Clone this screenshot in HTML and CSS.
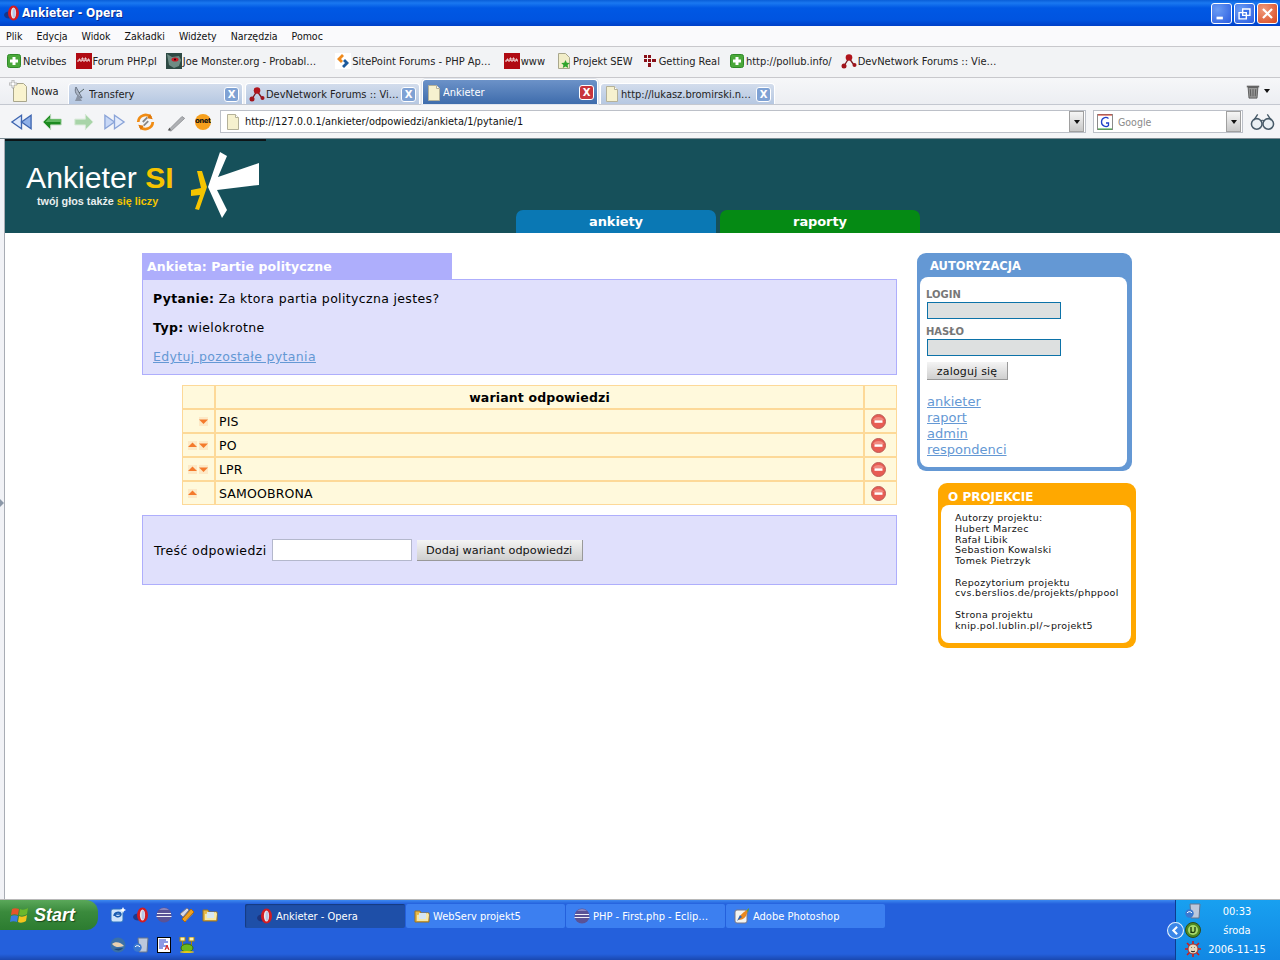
FILE: index.html
```html
<!DOCTYPE html>
<html lang="pl">
<head>
<meta charset="utf-8">
<title>Ankieter - Opera</title>
<link rel="stylesheet" href="styles.css">
</head>
<body>
<svg class="sprite" xmlns="http://www.w3.org/2000/svg">
  <symbol id="opera" viewBox="0 0 16 16"><ellipse cx="5" cy="10" rx="5" ry="3.500" fill="#1c2c70" opacity=".75"/><ellipse cx="9.500" cy="8" rx="5.500" ry="7.500" fill="#d01c24"/><ellipse cx="9.500" cy="8" rx="2.600" ry="5.500" fill="#f0e8e8"/><ellipse cx="10" cy="8" rx="1.500" ry="4.800" fill="#b8c8e8"/></symbol>
  <symbol id="plus" viewBox="0 0 16 16"><rect x="1.500" y="1.500" width="13" height="13" rx="2" fill="#4aa83a" stroke="#2f8a28"/><path d="M6.500 4h3v2.500H12v3H9.500V12h-3V9.500H4v-3h2.500z" fill="#fff"/></symbol>
  <symbol id="pulse" viewBox="0 0 16 16"><rect width="16" height="16" fill="#b00a12"/><path d="M1 8h2V6h1v2h2V5h1v3h2V5h1v3h2V6h1v2h1" fill="none" stroke="#f4e4e4" stroke-width="1"/></symbol>
  <symbol id="joe" viewBox="0 0 16 16"><rect width="16" height="16" fill="#2e4a44"/><path d="M1 1l5 3 7-1 2 4-2 6-5 2-5-3z" fill="#6e8c84"/><ellipse cx="9" cy="6.500" rx="3.500" ry="2" fill="#c81c28"/><circle cx="9" cy="6.500" r="1" fill="#300"/></symbol>
  <symbol id="sitepoint" viewBox="0 0 16 16"><rect width="16" height="16" fill="#fff"/><path d="M7 1 2 6l4 4 2-2-2-2 3-3z" fill="#f08a1c"/><path d="M9 15l5-5-4-4-2 2 2 2-3 3z" fill="#1c5a9c"/></symbol>
  <symbol id="pagestar" viewBox="0 0 16 16"><path d="M2.500.5h7l4 4v11h-11z" fill="#f1edc8" stroke="#a9a78c"/><path d="M9.500 7l1.300 2.800 3 .3-2.200 2 .6 3-2.700-1.500-2.700 1.500.6-3-2.200-2 3-.3z" fill="#31a52c"/></symbol>
  <symbol id="real" viewBox="0 0 16 16"><g fill="#8a1018"><rect x="2" y="2" width="3" height="3"/><rect x="6" y="2" width="3" height="3"/><rect x="2" y="6" width="3" height="3"/><rect x="6" y="6" width="3" height="3"/><rect x="10" y="6" width="4" height="3"/><rect x="6" y="10" width="3" height="4"/></g></symbol>
  <symbol id="dev" viewBox="0 0 16 16"><path d="M3 13 8 5l5 7" fill="none" stroke="#7a1a20" stroke-width="1.300"/><circle cx="8" cy="4.500" r="3.300" fill="#b0141c"/><circle cx="3" cy="13" r="2.500" fill="#a0141c"/><circle cx="13.500" cy="12" r="2" fill="#a0141c"/></symbol>
  <symbol id="page" viewBox="0 0 16 16"><path d="M2.500.5h8l3 3v12h-11z" fill="#f6f1cf" stroke="#b4b199"/><path d="M10.500.5v3h3" fill="#fff" stroke="#b4b199"/></symbol>
  <symbol id="dish" viewBox="0 0 16 16"><path d="M4 1c-2 4 0 9 6 11z" fill="#aeb8c8" stroke="#6a7484"/><path d="M6 8 3 15h7z" fill="#8a94a4"/><path d="M7 7l5-4" stroke="#566" stroke-width="1"/></symbol>
  <symbol id="newpage" viewBox="0 0 20 22"><path d="M4.500 3.500h10l3 3v15h-13z" fill="#f9f3cf" stroke="#a9a68c"/><path d="M3 0h2v3h3v2H5v3H3V5H0V3h3z" fill="#fff" stroke="#888" stroke-width=".6"/></symbol>
  <symbol id="trash" viewBox="0 0 16 18"><path d="M1 3h14v2H1z" fill="#666"/><path d="M2.500 5h11l-1 12h-9z" fill="#989898" stroke="#555"/><path d="M5 7l.5 8M8 7v8M11 7l-.5 8" stroke="#444" stroke-width=".8"/></symbol>
  <symbol id="back2" viewBox="0 0 24 20"><path d="M12 3 2 10l10 7z" fill="#dfeafc" stroke="#3f66b0" stroke-width="1.400"/><path d="M22 3l-10 7 10 7z" fill="#8fb0e8" stroke="#3f66b0" stroke-width="1.400"/></symbol>
  <symbol id="arrowl" viewBox="0 0 24 20"><path d="M10 2 2 10l8 8v-5h11V7H10z" fill="#1c8a20" stroke="#b8d8b8"/><path d="M9 5 4.500 10H21V7H9z" fill="#60b860"/></symbol>
  <symbol id="arrowr" viewBox="0 0 24 20"><path d="M14 2l8 8-8 8v-5H3V7h11z" fill="#a8d4a8" stroke="#d4e8d4"/></symbol>
  <symbol id="fwd2" viewBox="0 0 24 20"><path d="M2 3l10 7-10 7z" fill="#c8d8f6" stroke="#8aa4d8" stroke-width="1.400"/><path d="M12 3l10 7-10 7z" fill="#e4ecfc" stroke="#8aa4d8" stroke-width="1.400"/></symbol>
  <symbol id="reload" viewBox="0 0 22 22"><path d="M3 11a8 8 0 0 1 14-5" fill="none" stroke="#f08c14" stroke-width="3"/><path d="M19 11a8 8 0 0 1-14 5" fill="none" stroke="#f08c14" stroke-width="3"/><path d="M8 11l5-5M9 15l5-5" stroke="#888" stroke-width="2"/><path d="M16 2l3 6-6-1zM6 20l-3-6 6 1z" fill="#e07808"/></symbol>
  <symbol id="pen" viewBox="0 0 22 22"><path d="M2 20 17 5l3 2L5 21z" fill="#aeb0b4" stroke="#909296"/><path d="M2 20l1-3 2 3z" fill="#555"/></symbol>
  <symbol id="glasses" viewBox="0 0 26 18"><circle cx="7" cy="11" r="5.500" fill="#eaf0f4" stroke="#475a68" stroke-width="1.600"/><circle cx="19" cy="11" r="5.500" fill="#eaf0f4" stroke="#475a68" stroke-width="1.600"/><path d="M4 7 8 1M22 7l-4-6M11 8c1-1 3-1 4 0" fill="none" stroke="#475a68" stroke-width="1.400"/></symbol>
  <symbol id="up" viewBox="0 0 9 9"><rect width="9" height="9" fill="#fde9c6"/><path d="M4.500 1.500 9 6H0z" fill="#f47a2c"/></symbol>
  <symbol id="down" viewBox="0 0 9 9"><rect width="9" height="9" fill="#fde9c6"/><path d="M0 2.500h9L4.500 7z" fill="#f47a2c"/></symbol>
  <symbol id="del" viewBox="0 0 15 15"><circle cx="7.500" cy="7.500" r="7" fill="#e85c54" stroke="#b95c56"/><path d="M2 6a6 5 0 0 1 11 0z" fill="#f08a80"/><rect x="3.500" y="6.300" width="8" height="2.500" fill="#fff"/></symbol>
  <symbol id="winflag" viewBox="0 0 20 20"><path d="M2 4c2-1 4-1 7 0l-1 6c-2-1-5-1-7 0z" fill="#e4542a"/><path d="M10 4c2 1 5 1 8-1l-1 6c-3 2-6 2-8 1z" fill="#6cb82c"/><path d="M1 11c2-1 5-1 7 0l-1 6c-2-1-5-1-7 0z" fill="#3a7ce0"/><path d="M9 11c2 1 5 1 8-1l-1 6c-3 2-6 2-8 1z" fill="#f4c41c"/></symbol>
  <symbol id="ie" viewBox="0 0 16 16"><rect x="1" y="2" width="12" height="13" rx="2" fill="#cfe4fa" stroke="#2a70c0"/><path d="M4 9c0-4 6-5 7-2H5c0 3 4 4 6 1" fill="none" stroke="#1a5cb0" stroke-width="1.400"/><path d="M13 0l1 2 2 1-2 1-1 2-1-2-2-1 2-1z" fill="#fff"/></symbol>
  <symbol id="eclipse" viewBox="0 0 16 16"><circle cx="8" cy="8" r="7.500" fill="#5a5296"/><path d="M1 6.500h14M.5 9.500h15" stroke="#f0f0f8" stroke-width="1.200"/><path d="M3 3a7 7 0 0 1 10 0z" fill="#8a86c0"/></symbol>
  <symbol id="winamp" viewBox="0 0 16 16"><path d="M3 12 12 2l3 3-9 10z" fill="#f0a020" stroke="#a86810"/><path d="M1 7l7-6 2 2-6 7zM7 14l7-7" stroke="#7a7a8a" fill="#d8d8e8"/></symbol>
  <symbol id="folder" viewBox="0 0 16 16"><path d="M1 3h5l1 2h8v9H1z" fill="#e8b848" stroke="#9a7420"/><path d="M3 7l11-2 1 2-1 6H3z" fill="#f6e8a8"/><path d="M5 5h7v6H5z" fill="#d4e6f4"/></symbol>
  <symbol id="tbird" viewBox="0 0 16 16"><circle cx="8" cy="8" r="7.500" fill="#3a70a8"/><path d="M2 7c3-3 9-2 12 2-4 1-8 2-11-1z" fill="#e8d0b0"/><path d="M4 12c3 2 7 2 9-1z" fill="#1e4878"/></symbol>
  <symbol id="recycle" viewBox="0 0 16 16"><path d="M5 1h10l-1 14H6z" fill="#bcc8dc" stroke="#66748c"/><circle cx="4.500" cy="10.500" r="4.200" fill="#3a78d0"/><path d="M2 10a3 3 0 0 1 5 0" stroke="#fff" fill="none"/></symbol>
  <symbol id="notes" viewBox="0 0 16 16"><rect x="1.500" y=".5" width="13" height="15" fill="#fff" stroke="#000"/><path d="M3 3h7M3 5h9M3 7h5M3 9h7M3 11h4" stroke="#1c34c8"/><path d="M9 13l2-5 2 5M10 11h2" stroke="#d01818" fill="none"/></symbol>
  <symbol id="frog" viewBox="0 0 16 16"><rect x="1" y="0" width="5" height="4" fill="#fff3b0" stroke="#a88410"/><rect x="10" y="0" width="5" height="4" fill="#fff3b0" stroke="#a88410"/><path d="M3.500 4v8M12.500 4v8" stroke="#a88410"/><ellipse cx="8" cy="11" rx="6" ry="4" fill="#6cb81c" stroke="#3c6c08"/><ellipse cx="8" cy="15" rx="7" ry="1" fill="#e8c818"/></symbol>
  <symbol id="ps" viewBox="0 0 16 16"><rect x="1" y="2" width="12" height="13" rx="2" fill="#f4f4f0" stroke="#778"/><path d="M4 12c1-4 4-7 9-10l2-2-3 8c-2 3-5 4-8 4z" fill="#e88820"/><path d="M13 2l2-2-1 5z" fill="#48a038"/><path d="M3 13l3-6 2 2z" fill="#2c64b8"/></symbol>
  <symbol id="utorrent" viewBox="0 0 16 16"><circle cx="8" cy="8" r="7.500" fill="#4e8a22" stroke="#2e4a18"/><circle cx="8" cy="8" r="5" fill="#a8d86c"/><path d="M6 5v6M6 9c0 2 4 2 4 0V5" stroke="#1a3a08" fill="none" stroke-width="1.300"/></symbol>
  <symbol id="sun" viewBox="0 0 16 16"><path d="M8 0v16M0 8h16M2 2l12 12M14 2 2 14" stroke="#d81818" stroke-width="1.600"/><circle cx="8" cy="8" r="5" fill="#e8d8c0" stroke="#a03030"/><path d="M6 6.500h.5M9.500 6.500h.5M6 10c1 1 3 1 4 0" stroke="#222"/></symbol>
</svg>

<header class="titlebar">
  <svg class="ic16"><use href="#opera"/></svg>
  <span class="title">Ankieter - Opera</span>
  <span class="winbtns">
    <span class="winbtn">
      <svg viewBox="0 0 21 21"><rect x="5" y="14" width="7" height="3" fill="#fff"/></svg>
    </span>
    <span class="winbtn">
      <svg viewBox="0 0 21 21"><path d="M8.500 5.500h8v7h-8zM4.500 9.500h8v7h-8z" fill="#3a70e8" stroke="#fff" stroke-width="1.500"/></svg>
    </span>
    <span class="winbtn winclose">
      <svg viewBox="0 0 21 21"><path d="M5.500 5.500l10 10M15.500 5.500l-10 10" stroke="#fff" stroke-width="2.400"/></svg>
    </span>
  </span>
</header>

<nav class="menubar">
  <span>Plik</span><span>Edycja</span><span>Widok</span><span>Zakładki</span><span>Widżety</span><span>Narzędzia</span><span>Pomoc</span>
</nav>

<nav class="bookmarks">
  <span class="bm"><svg class="ic16"><use href="#plus"/></svg>Netvibes</span>
  <span class="bm"><svg class="ic16"><use href="#pulse"/></svg>Forum PHP.pl</span>
  <span class="bm"><svg class="ic16"><use href="#joe"/></svg>Joe Monster.org - Probabl…</span>
  <span class="bm bmsite"><svg class="ic16"><use href="#sitepoint"/></svg>SitePoint Forums - PHP Ap…</span>
  <span class="bm bmwww"><svg class="ic16"><use href="#pulse"/></svg>www</span>
  <span class="bm bmproj"><svg class="ic16"><use href="#pagestar"/></svg>Projekt SEW</span>
  <span class="bm"><svg class="ic16"><use href="#real"/></svg>Getting Real</span>
  <span class="bm"><svg class="ic16"><use href="#plus"/></svg>http://pollub.info/</span>
  <span class="bm"><svg class="ic16"><use href="#dev"/></svg>DevNetwork Forums :: Vie…</span>
</nav>

<div class="tabbar">
  <span class="newtab"><svg class="icnew"><use href="#newpage"/></svg>Nowa</span>
  <span class="tab"><svg class="ic16"><use href="#dish"/></svg><span class="tabtext">Transfery</span><span class="tabx">X</span></span>
  <span class="tab"><svg class="ic16"><use href="#dev"/></svg><span class="tabtext">DevNetwork Forums :: Vi…</span><span class="tabx">X</span></span>
  <span class="tab tabactive"><svg class="ic16"><use href="#page"/></svg><span class="tabtext">Ankieter</span><span class="tabx">X</span></span>
  <span class="tab"><svg class="ic16"><use href="#page"/></svg><span class="tabtext">http://lukasz.bromirski.n…</span><span class="tabx">X</span></span>
  <span class="trash"><svg class="ic16"><use href="#trash"/></svg><i class="caret"></i></span>
</div>

<div class="addressbar">
  <span class="tools">
    <svg class="tool"><use href="#back2"/></svg>
    <svg class="tool"><use href="#arrowl"/></svg>
    <svg class="tool"><use href="#arrowr"/></svg>
    <svg class="tool"><use href="#fwd2"/></svg>
    <svg class="tool"><use href="#reload"/></svg>
    <svg class="tool"><use href="#pen"/></svg>
    <span class="onet">onet</span>
  </span>
  <span class="field urlfield"><svg class="ic16"><use href="#page"/></svg><span class="url">http://127.0.0.1/ankieter/odpowiedzi/ankieta/1/pytanie/1</span><span class="drop"><i class="caret"></i></span></span>
  <span class="field searchfield">
    <svg class="ic16" viewBox="0 0 16 16"><rect x=".5" y=".5" width="15" height="15" fill="#fff" stroke="#8a8a8a"/><path d="M1 1h14" stroke="#d03020"/><path d="M1 15h14" stroke="#30a030"/><path d="M11.500 4.500C9 2.500 4.500 3.500 4.500 8s5 5.500 7 3.500V9H9" fill="none" stroke="#2040c8" stroke-width="1.300"/></svg>
    <span class="search">Google</span><span class="drop"><i class="caret"></i></span>
  </span>
  <svg class="glasses"><use href="#glasses"/></svg>
</div>

<div class="viewport">
  <div class="gutter"><i class="gutterarrow"></i></div>
  <div class="page">
    <div class="banner">
      <div class="logo">
        <div class="logotext">
          <div class="brand">Ankieter <b>SI</b></div>
          <div class="slogan">twój głos także <em>się liczy</em></div>
        </div>
        <svg class="logomark" viewBox="0 0 72 70">
          <path d="M0 38l10-2-4-17 5 0 5 16-1 3-7 20-4-1 5-14-9 1z" fill="#f5c400"/>
          <path d="M17 35 29 0l7 4-9 21L68 11v22l-42 5 10 20-5 8z" fill="#fff"/>
        </svg>
      </div>
      <nav class="mainnav">
        <a class="navblue">ankiety</a>
        <a class="navgreen">raporty</a>
      </nav>
    </div>

    <div class="content">
      <main class="maincol">
        <h2 class="boxtitle">Ankieta: Partie polityczne</h2>
        <section class="infobox">
          <p><b>Pytanie:</b> Za ktora partia polityczna jestes?</p>
          <p><b>Typ:</b> wielokrotne</p>
          <p><a class="link">Edytuj pozostałe pytania</a></p>
        </section>

        <table class="variants">
          <thead>
            <tr><th class="cside"></th><th>wariant odpowiedzi</th><th class="cside"></th></tr>
          </thead>
          <tbody>
            <tr>
              <td class="cside carrows"><span class="arrowslot"></span><svg class="arrow"><use href="#down"/></svg></td>
              <td>PIS</td>
              <td class="cside cdel"><svg class="del"><use href="#del"/></svg></td>
            </tr>
            <tr>
              <td class="cside carrows"><svg class="arrow"><use href="#up"/></svg><svg class="arrow"><use href="#down"/></svg></td>
              <td>PO</td>
              <td class="cside cdel"><svg class="del"><use href="#del"/></svg></td>
            </tr>
            <tr>
              <td class="cside carrows"><svg class="arrow"><use href="#up"/></svg><svg class="arrow"><use href="#down"/></svg></td>
              <td>LPR</td>
              <td class="cside cdel"><svg class="del"><use href="#del"/></svg></td>
            </tr>
            <tr>
              <td class="cside carrows"><svg class="arrow"><use href="#up"/></svg><span class="arrowslot"></span></td>
              <td>SAMOOBRONA</td>
              <td class="cside cdel"><svg class="del"><use href="#del"/></svg></td>
            </tr>
          </tbody>
        </table>

        <form class="addform">
          <label>Treść odpowiedzi</label>
          <input class="addinput" type="text">
          <button class="btn addbtn" type="button">Dodaj wariant odpowiedzi</button>
        </form>
      </main>

      <aside class="sidecol">
        <section class="panel panelblue">
          <h3>AUTORYZACJA</h3>
          <div class="panelbody">
            <label class="flabel">LOGIN</label>
            <input class="finput" type="text">
            <label class="flabel">HASŁO</label>
            <input class="finput" type="password">
            <button class="btn loginbtn" type="button">zaloguj się</button>
            <ul class="sidelinks">
              <li><a class="link">ankieter</a></li>
              <li><a class="link">raport</a></li>
              <li><a class="link">admin</a></li>
              <li><a class="link">respondenci</a></li>
            </ul>
          </div>
        </section>
        <section class="panel panelorange">
          <h3>O PROJEKCIE</h3>
          <div class="panelbody">
            <p>Autorzy projektu:<br>Hubert Marzec<br>Rafał Libik<br>Sebastion Kowalski<br>Tomek Pietrzyk</p>
            <p>Repozytorium projektu<br>cvs.berslios.de/projekts/phppool</p>
            <p>Strona projektu<br>knip.pol.lublin.pl/~projekt5</p>
          </div>
        </section>
      </aside>
    </div>
  </div>
</div>

<footer class="taskbar">
  <span class="start"><svg class="flag"><use href="#winflag"/></svg>Start</span>
  <span class="quick">
    <svg class="ic16"><use href="#ie"/></svg>
    <svg class="ic16"><use href="#opera"/></svg>
    <svg class="ic16"><use href="#eclipse"/></svg>
    <svg class="ic16"><use href="#winamp"/></svg>
    <svg class="ic16"><use href="#folder"/></svg>
    <svg class="ic16"><use href="#tbird"/></svg>
    <svg class="ic16"><use href="#recycle"/></svg>
    <svg class="ic16"><use href="#notes"/></svg>
    <svg class="ic16"><use href="#frog"/></svg>
  </span>
  <span class="tasks">
    <span class="task taskactive"><svg class="ic16"><use href="#opera"/></svg>Ankieter - Opera</span>
    <span class="task"><svg class="ic16"><use href="#folder"/></svg>WebServ projekt5</span>
    <span class="task"><svg class="ic16"><use href="#eclipse"/></svg>PHP - First.php - Eclip…</span>
    <span class="task"><svg class="ic16"><use href="#ps"/></svg>Adobe Photoshop</span>
  </span>
  <span class="chevron"><svg viewBox="0 0 16 16"><circle cx="8" cy="8" r="7.500" fill="#3a86e8" stroke="#e4f0fc"/><path d="M9.500 4.500 6 8l3.500 3.500" fill="none" stroke="#fff" stroke-width="2"/></svg></span>
  <span class="tray">
    <span class="trayicons">
      <svg class="ic16"><use href="#recycle"/></svg>
      <svg class="ic16"><use href="#utorrent"/></svg>
      <svg class="ic16"><use href="#sun"/></svg>
    </span>
    <span class="clock"><span>00:33</span><span>środa</span><span>2006-11-15</span></span>
  </span>
</footer>
</body>
</html>
```
FILE: styles.css
```css
* { box-sizing: border-box; }
html, body { margin: 0; padding: 0; }
body {
  width: 1280px;
  height: 960px;
  overflow: hidden;
  display: flex;
  flex-direction: column;
  background: #f1f2f6;
  font-family: "DejaVu Sans", Verdana, sans-serif;
  color: #000;
}
.sprite { width: 0; height: 0; display: block; flex: none; }
svg { display: block; flex: none; }
.ic16 { width: 16px; height: 16px; }
.icnew { width: 20px; height: 22px; }

/* title bar */
.titlebar {
  height: 26px;
  flex: none;
  display: flex;
  align-items: center;
  padding: 0 2px 0 4px;
  gap: 2px;
  background: linear-gradient(#0a5ed8 0, #1a78f0 3px, #0058e4 8px, #0054e0 20px, #0040c8 26px);
}
.title {
  color: #fff;
  font: bold 12px/1 "DejaVu Sans", sans-serif;
  font-stretch: condensed;
  text-shadow: 1px 1px 0 #0a2c90;
}
.winbtns { margin-left: auto; display: flex; gap: 2px; }
.winbtn {
  width: 21px;
  height: 21px;
  border: 1px solid #fff;
  border-radius: 3px;
  background: radial-gradient(circle at 30% 30%, #6a9cf4, #2a5ce0);
}
.winbtn svg { width: 19px; height: 19px; }
.winclose { background: radial-gradient(circle at 30% 30%, #f09a7c, #d8461c); }

/* menu */
.menubar {
  height: 21px;
  flex: none;
  display: flex;
  align-items: center;
  gap: 14px;
  padding: 0 6px;
  background: #fafafc;
  border-bottom: 1px solid #c8c8cc;
  font: 10.500px "DejaVu Sans", sans-serif;
  font-stretch: condensed;
  color: #111;
}

/* bookmarks */
.bookmarks {
  height: 31px;
  flex: none;
  display: flex;
  align-items: center;
  gap: 9px;
  padding: 0 6px 2px;
  background: #f2f3f5;
  border-bottom: 1px solid #c8c8cc;
  font: 11px "DejaVu Sans", sans-serif;
  font-stretch: condensed;
  color: #222;
}
.bm { display: flex; align-items: center; gap: 1px; white-space: nowrap; }
.bmsite { margin-left: 10px; }
.bmwww { margin-left: 4px; }
.bmproj { margin-left: 2px; }

/* tabs */
.tabbar {
  height: 27px;
  flex: none;
  display: flex;
  align-items: flex-end;
  padding-left: 9px;
  gap: 2px;
  background: linear-gradient(#f6f7f9, #eceef2);
  border-bottom: 1px solid #c4c8d0;
  font: 11px "DejaVu Sans", sans-serif;
  font-stretch: condensed;
}
.newtab {
  width: 57px;
  height: 26px;
  display: flex;
  align-items: center;
  gap: 2px;
  color: #222;
}
.tab {
  width: 175px;
  height: 21px;
  display: flex;
  align-items: center;
  gap: 1px;
  padding: 0 3px;
  background: linear-gradient(#d2dcec, #b6c8e2);
  border: 1px solid #fff;
  border-bottom: 0;
  border-radius: 4px 4px 0 0;
  color: #222;
}
.tabtext { flex: 1; white-space: nowrap; overflow: hidden; }
.tabx {
  width: 15px;
  height: 15px;
  flex: none;
  border: 1px solid #fff;
  border-radius: 3px;
  background: #7fa2d4;
  color: #fff;
  font: bold 10px/13px "DejaVu Sans", sans-serif;
  text-align: center;
}
.tabactive {
  width: 176px;
  height: 25px;
  background: linear-gradient(#6c92c8, #3e6cac);
  color: #fff;
  box-shadow: 0 0 0 1px #dfe4ec;
  padding-top: 1px;
}
.tabactive .tabx { background: #c8343c; }
.trash {
  margin-left: auto;
  margin-right: 10px;
  align-self: center;
  display: flex;
  align-items: center;
  gap: 3px;
}
.caret {
  display: block;
  width: 0;
  height: 0;
  border: 3px solid transparent;
  border-top: 4px solid #111;
  border-bottom: 0;
}

/* address */
.addressbar {
  height: 34px;
  flex: none;
  display: flex;
  align-items: center;
  padding: 0 7px 0 10px;
  background: #f4f5f7;
  border-bottom: 1px solid #7c8c94;
}
.tools { display: flex; align-items: center; gap: 8px; width: 210px; flex: none; }
.tool { width: 23px; height: 20px; }
.onet {
  width: 16px;
  height: 16px;
  margin-left: -1px;
  border-radius: 50%;
  background: #f6a01e;
  color: #111;
  font: bold 7px/15px "DejaVu Sans", sans-serif;
  letter-spacing: -.5px;
  text-align: center;
  overflow: hidden;
}
.field {
  height: 23px;
  display: flex;
  align-items: center;
  background: #fff;
  border: 1px solid #bcc0c8;
  padding-left: 4px;
  font: 10.500px "DejaVu Sans", sans-serif;
  font-stretch: condensed;
}
.urlfield { width: 866px; flex: none; }
.url { flex: 1; padding-left: 4px; color: #111; font-size: 10.900px; }
.searchfield { width: 150px; flex: none; margin-left: 7px; padding-left: 3px; }
.search { flex: 1; padding-left: 5px; color: #8a8a8a; }
.drop {
  width: 15px;
  height: 21px;
  flex: none;
  display: flex;
  align-items: center;
  justify-content: center;
  margin-right: 1px;
  background: linear-gradient(#f6f6f6, #c8c8c8);
  border: 1px solid #a0a0a0;
}
.glasses { width: 25px; height: 18px; margin-left: 7px; }

/* page */
.viewport { height: 761px; flex: none; display: flex; border-bottom: 1px solid #b8b8b8; }
.gutter { width: 5px; flex: none; border-right: 1px solid #a8acb4; padding-top: 360px; }
.gutterarrow {
  display: block;
  width: 0;
  height: 0;
  border: 4px solid transparent;
  border-left: 4px solid #8c98a8;
  border-right: 0;
}
.page { flex: 1; background: #fff; min-width: 0; }
.banner { height: 94px; display: flex; background: #16505a; }
.logo {
  width: 261px;
  flex: none;
  display: flex;
  border-top: 2px solid #0c1416;
}
.logotext { width: 186px; padding: 19px 0 0 21px; flex: none; }
.brand {
  color: #fff;
  font: 30.200px/36px "Liberation Sans", Arial, sans-serif;
  white-space: nowrap;
}
.brand b { color: #f5c400; }
.slogan {
  color: #e8eeee;
  font: bold 10.800px/14px "Liberation Sans", Arial, sans-serif;
  margin-top: -2px;
  padding-left: 11px;
  white-space: nowrap;
}
.slogan em { font-style: normal; color: #f5c400; }
.logomark { width: 72px; height: 70px; margin-top: 11px; }
.mainnav { margin-left: 250px; align-self: flex-end; display: flex; gap: 4px; }
.mainnav a {
  width: 200px;
  height: 23px;
  border-radius: 7px 7px 0 0;
  color: #fff;
  font: bold 13px/23px "DejaVu Sans", sans-serif;
  letter-spacing: -.1px;
  text-align: center;
}
.navblue { background: #0a78b4; }
.navgreen { background: #058a14; }

.content { display: flex; padding: 20px 0 0 137px; align-items: flex-start; }
.maincol { width: 755px; flex: none; font-size: 12.500px; }
.boxtitle {
  width: 310px;
  height: 26px;
  margin: 0;
  padding: 0 5px;
  background: #aeaefc;
  color: #fff;
  font: bold 12.500px/27px "DejaVu Sans", sans-serif;
  letter-spacing: .1px;
}
.infobox {
  height: 96px;
  padding: 4px 10px 0;
  background: #e0e0fc;
  border: 1px solid #aeaefc;
}
.infobox p { margin: 0; line-height: 29px; letter-spacing: .35px; white-space: nowrap; }
.link { color: #6498d4; text-decoration: underline; }

.variants {
  width: 715px;
  margin: 10px 0 0 40px;
  table-layout: fixed;
  border-collapse: separate;
  border-spacing: 0;
  border: 1px solid #fdd998;
  background: #fff9dc;
}
.variants th, .variants td {
  height: 24px;
  padding: 0 3px;
  border-right: 2px solid #fdd998;
  border-bottom: 2px solid #fdd998;
  letter-spacing: .15px;
}
.variants th { font-size: 12.500px; text-align: center; }
.variants tr > :last-child { border-right: 0; }
.variants tbody tr:last-child td { border-bottom: 0; height: 22px; }
.cside { width: 33px; }
.variants th.cside:last-child, .variants td.cside:last-child { width: 31px; }
.variants td.carrows { padding: 0 0 0 5px; }
.variants td.cdel { padding: 0 0 0 6px; }
.carrows { font-size: 0; }
.arrow, .arrowslot { display: inline-block; width: 9px; height: 9px; margin-right: 2px; vertical-align: middle; }
.del { width: 15px; height: 15px; }

.addform {
  height: 70px;
  margin-top: 10px;
  display: flex;
  align-items: center;
  padding: 0 0 0 11px;
  background: #e0e0fc;
  border: 1px solid #aeaefc;
  letter-spacing: .4px;
}
.addinput {
  width: 140px;
  height: 22px;
  margin: 0 5px;
  padding: 0;
  background: #fff;
  border: 1px solid #b4b8cc;
}
.btn {
  padding: 1px 0 0;
  background: linear-gradient(#f4f4f4, #cfcfcf);
  border: 0;
  border-right: 1px solid #999;
  border-bottom: 1px solid #999;
  color: #111;
  font-family: "DejaVu Sans", sans-serif;
}
.addbtn { width: 166px; height: 21px; font-size: 11.300px; }

/* side panels */
.sidecol { margin-left: 20px; flex: none; width: 220px; display: flex; flex-direction: column; gap: 12px; }
.panel { border-radius: 9px; }
.panel h3 { margin: 0; color: #fff; font-family: "DejaVu Sans", sans-serif; font-weight: bold; white-space: nowrap; }
.panelbody { background: #fff; border-radius: 8px; }
.panelblue { width: 215px; height: 218px; background: #6498d4; padding: 0 5px 4px 3px; }
.panelblue h3 { height: 24px; padding-left: 10px; font-size: 11.500px; line-height: 26px; }
.panelblue .panelbody { height: 190px; padding: 11px 6px 0; }
.flabel { display: block; height: 13px; color: #777; font: bold 10px/14px "DejaVu Sans", sans-serif; }
.finput {
  display: block;
  width: 134px;
  height: 17px;
  margin: 1px 0 6px 1px;
  padding: 0;
  background: #dde0e0;
  border: 1px solid #0c72a8;
  border-width: 1.500px;
}
.loginbtn { display: block; width: 81px; height: 18px; margin: 6px 0 0 1px; font-size: 11px; letter-spacing: .2px; }
.sidelinks {
  list-style: none;
  margin: 14px 0 0 1px;
  padding: 0;
  font-size: 13px;
  line-height: 16px;
}
.panelorange { width: 198px; height: 165px; margin-left: 21px; background: #ffa800; padding: 0 5px 5px 3px; }
.panelorange h3 { height: 22px; padding-left: 7px; font-size: 12px; line-height: 28px; }
.panelorange .panelbody { height: 138px; padding: 8px 14px 0; font-size: 9.500px; line-height: 10.750px; letter-spacing: .32px; color: #111; }
.panelorange p { margin: 0 0 10.750px; white-space: nowrap; }

/* task bar */
.taskbar {
  height: 60px;
  flex: none;
  display: flex;
  align-items: flex-start;
  background: linear-gradient(#3c88f0 0, #2460dc 4px, #2460dc 54px, #1a48b0 60px);
  color: #fff;
  font: 11px "DejaVu Sans", sans-serif;
  font-stretch: condensed;
}
.start {
  width: 98px;
  height: 30px;
  flex: none;
  display: flex;
  align-items: center;
  gap: 4px;
  padding-left: 10px;
  border-radius: 0 12px 12px 0;
  background: linear-gradient(#5aa85a, #3a8a3c 40%, #2c7c30);
  font: italic bold 18px "Liberation Sans", sans-serif;
  text-shadow: 1px 1px 1px #1a4a1a;
}
.flag { width: 20px; height: 20px; }
.quick {
  width: 130px;
  flex: none;
  margin: 7px 0 0 12px;
  display: grid;
  grid-template-columns: repeat(5, 23px);
  row-gap: 14px;
}
.tasks { display: flex; gap: 1px; margin: 4px 0 0 5px; }
.task {
  width: 159px;
  height: 24px;
  display: flex;
  align-items: center;
  gap: 3px;
  padding-left: 8px;
  background: #3c7ff0;
  border-radius: 2px;
  white-space: nowrap;
}
.taskactive { width: 160px; padding-left: 12px; background: #1e4fa8; box-shadow: inset 1px 1px 1px #143a80; }
.chevron { margin: 22px -9px 0 auto; position: relative; z-index: 1; width: 17px; height: 17px; }
.chevron svg { width: 17px; height: 17px; }
.tray {
  width: 105px;
  height: 60px;
  flex: none;
  display: flex;
  background: linear-gradient(#18a0f0, #1288e4);
  border-left: 1px solid #0c3c90;
}
.trayicons { width: 31px; padding: 3px 0 0 9px; display: flex; flex-direction: column; gap: 3px; }
.clock { display: flex; flex-direction: column; align-items: center; width: 60px; padding-top: 2px; line-height: 19px; }
```
